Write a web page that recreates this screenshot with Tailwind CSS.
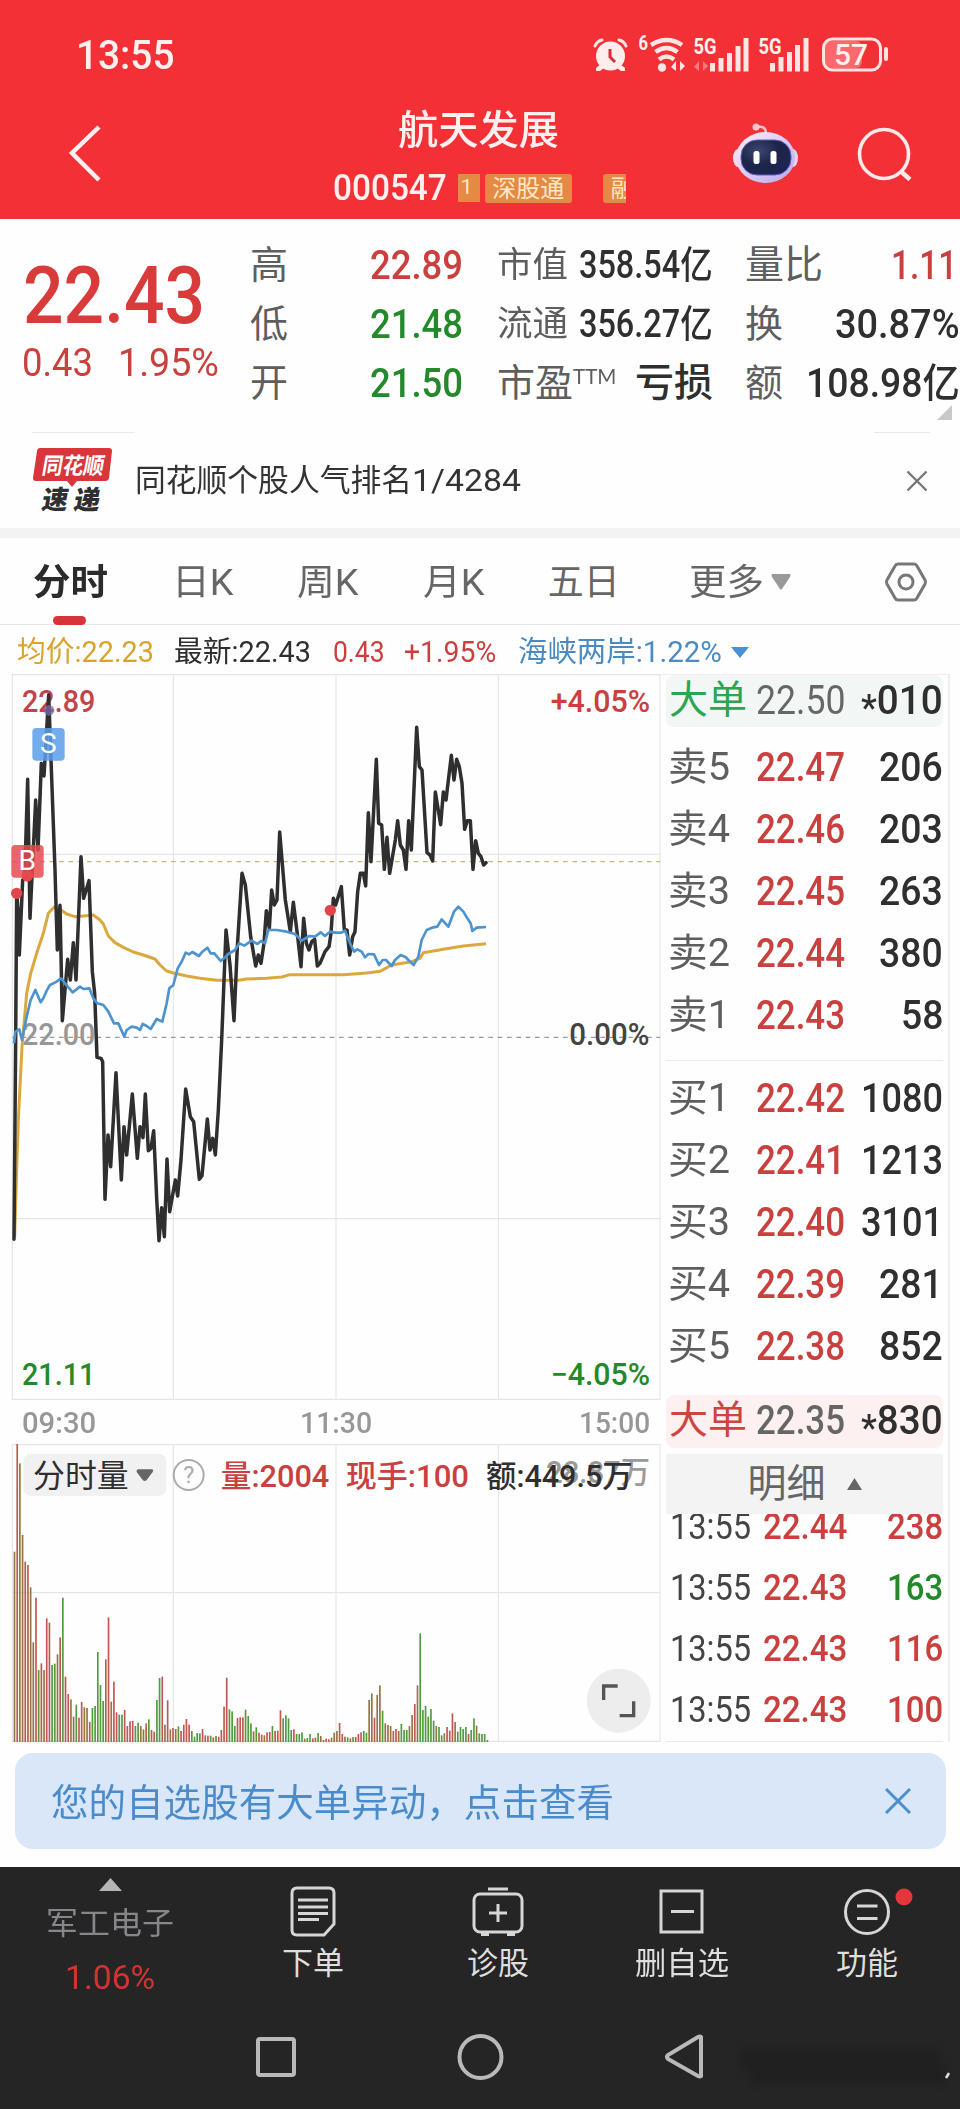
<!DOCTYPE html>
<html lang="zh-CN">
<head>
<meta charset="utf-8">
<title>航天发展 000547</title>
<script src="https://cdn.jsdelivr.net/npm/@tailwindcss/browser@4"></script>
</head>
<body class="bg-white">
<div class="flex h-[2109px] w-[960px] flex-col overflow-hidden bg-[#fefefe] font-[Roboto,'Noto_Sans_CJK_SC',sans-serif] text-[#2f2f2f] [&_[data-w]]:inline-block [&_[data-w]]:shrink-0 [&_[data-w]]:origin-left [&_[data-w]]:whitespace-nowrap">

  <!-- Header -->
  <header class="h-[219px] shrink-0 bg-[#f33036] text-[#fff0f0]">
    <div class="flex h-[82px] items-start justify-between">
      <div class="ml-[76px] mt-[36px] text-[40px] font-medium leading-[40px]"><span data-w="98">13:55</span></div>
      <svg class="mt-[30px] h-[50px] w-[372px]" viewBox="588 30 372 50" fill="none" stroke="#ffe4e4">
        <g stroke="none" fill="#ffecec">
          <circle cx="610.500" cy="56" r="14.500"/>
          <path d="M596 68l5-4 3 4-4 3h-4zM625 68l-5-4-3 4 4 3h4z"/>
        </g>
        <path d="M595 46q2-5 7-6M626 46q-2-5-7-6" stroke-width="3" stroke-linecap="round"/>
        <path d="M610 49v8l5 5" stroke="#d8303a" stroke-width="3"/>
        <path d="M651 45q16-10 31 0M655.500 52q11-8 22 0M659 59.500q7.500-6 15 0" stroke-width="4.500"/>
        <circle cx="662" cy="67.500" r="4.200" fill="#ffe4e4" stroke="none"/>
        <path d="M676 61v10l-5-4zM680 71v-10l5 5z" fill="#ffe4e4" stroke="none"/>
        <path d="M699 61v10l-5-4zM703 71v-10l5 5z" fill="#fb7d80" stroke="none"/>
        <g stroke-width="5">
          <path d="M712.500 71.500V63M721 71.500V58M729.500 71.500V53M738 71.500V46M746 71.500V38"/>
          <path d="M772.500 71.500V63M781 71.500V57M789.500 71.500V52M797.500 71.500V45M806 71.500V38"/>
        </g>
        <rect x="825" y="41" width="37" height="27" rx="6" fill="#fb696d" stroke="none"/>
        <rect x="823.500" y="39" width="57" height="31" rx="9" stroke-width="3"/>
        <path d="M886 49v10" stroke-width="4" stroke-linecap="round"/>
        <g fill="#fff0f0" stroke="none" class="font-bold">
          <text x="638.500" y="49.500" font-size="20" textLength="9.500" lengthAdjust="spacingAndGlyphs">6</text>
          <text x="693.500" y="54" font-size="22" textLength="23" lengthAdjust="spacingAndGlyphs">5G</text>
          <text x="758.500" y="54" font-size="22" textLength="23" lengthAdjust="spacingAndGlyphs">5G</text>
          <text x="834" y="65" font-size="29" class="font-medium" textLength="34" lengthAdjust="spacingAndGlyphs">57</text>
        </g>
      </svg>
    </div>
    <div class="flex h-[137px]">
      <svg class="ml-[60px] mt-[38px] h-[66px] w-[50px] shrink-0" viewBox="60 120 50 66" fill="none"><path d="M99 127L72 153L99 180" stroke="#fff0f0" stroke-width="4.500"/></svg>
      <div class="ml-[223px] w-[295px] shrink-0 overflow-hidden">
        <div class="ml-[65px] mt-[28px] h-[42px] text-[40px] font-medium leading-[42px]"><span data-w="161">航天发展</span></div>
        <div class="mt-[21px] flex h-[30px] items-center">
          <div class="text-[36px] font-medium leading-[32px]"><span data-w="114">000547</span></div>
          <div class="ml-[11px] h-[28px] w-[22px] bg-[#e58a45] pl-[3px] text-[21px] leading-[27px] text-[#ffe9c4]">1</div>
          <div class="ml-[5px] flex h-[29px] w-[87px] justify-center rounded-[3px] bg-[#e58a45] text-[24px] leading-[30px] text-[#ffe9c4]"><span data-w="72">深股通</span></div>
          <div class="ml-[31px] h-[29px] w-[23px] overflow-hidden rounded-l-[3px] bg-[#e58a45] pl-[8px] text-[24px] leading-[30px] text-[#ffe9c4]">融</div>
        </div>
      </div>
      <svg class="ml-[100px] mt-[38px] h-[68px] w-[190px] shrink-0" viewBox="728 120 190 68" fill="none">
        <defs>
          <linearGradient id="shell" x1="0" y1="0" x2="1" y2="1"><stop offset="0" stop-color="#ffeef4"/><stop offset=".5" stop-color="#d9cdf6"/><stop offset="1" stop-color="#b9a5ee"/></linearGradient>
          <radialGradient id="visor" cx=".35" cy=".3" r=".8"><stop offset="0" stop-color="#3b4774"/><stop offset=".5" stop-color="#1d2549"/><stop offset="1" stop-color="#1c2456"/></radialGradient>
        </defs>
        <circle cx="756" cy="127" r="3.500" fill="#ffc4cc"/><path d="M757 127q9-2 9 7" stroke="#ffc4cc" stroke-width="2.500"/>
        <ellipse cx="738" cy="158" rx="5" ry="9" fill="#f3ddf0"/><ellipse cx="793" cy="158" rx="5" ry="9" fill="#e5d5f5"/>
        <ellipse cx="765.500" cy="157.500" rx="29.500" ry="25.500" fill="url(#shell)"/>
        <rect x="741" y="140" width="50" height="35" rx="16" fill="url(#visor)" stroke="#6b5fc0"/>
        <rect x="753.500" y="151" width="6" height="13" rx="2.500" fill="#fff"/><rect x="770.500" y="151" width="6" height="13" rx="2.500" fill="#fff"/>
        <circle cx="884" cy="154" r="24.500" stroke="#ffe9e9" stroke-width="3.600"/><path d="M900.500 171l9.500 8.500" stroke="#ffe9e9" stroke-width="4.500"/>
      </svg>
    </div>
  </header>

  <!-- Quote -->
  <section class="flex h-[213px] shrink-0 pt-[17px]">
    <div class="w-[250px] shrink-0 text-[#d93a3a]">
      <div class="ml-[23px] mt-[20px] h-[80px] text-[80px] font-medium leading-[80px]"><span data-w="182">22.43</span></div>
      <div class="ml-[22px] mt-[7px] flex h-[40px] gap-[25px] text-[38px] leading-[40px] text-[#c9403e]"><span data-w="71">0.43</span><span data-w="101">1.95%</span></div>
    </div>
    <div class="w-[213px] shrink-0 text-[40px] leading-[59px]">
      <div class="flex justify-between"><span class="text-[38px] text-[#5e5e5e]">高</span><span data-w="93" class="font-medium text-[#c9403e]">22.89</span></div>
      <div class="flex justify-between"><span class="text-[38px] text-[#5e5e5e]">低</span><span data-w="93" class="font-medium text-[#23892a]">21.48</span></div>
      <div class="flex justify-between"><span class="text-[38px] text-[#5e5e5e]">开</span><span data-w="93" class="font-medium text-[#23892a]">21.50</span></div>
    </div>
    <div class="ml-[34px] w-[216px] shrink-0 text-[38px] leading-[59px]">
      <div class="flex justify-between"><span data-w="71" class="text-[35px] text-[#5e5e5e]">市值</span><span data-w="134" class="font-medium">358.54亿</span></div>
      <div class="flex justify-between"><span data-w="71" class="text-[35px] text-[#5e5e5e]">流通</span><span data-w="134" class="font-medium">356.27亿</span></div>
      <div class="flex"><span class="text-[38px] text-[#5e5e5e]">市盈</span><span data-w="43" class="-mt-[8px] font-[Lato] text-[22px] text-[#5e5e5e]">TTM</span><span class="ml-auto text-[39px] font-medium">亏损</span></div>
    </div>
    <div class="ml-[32px] w-[215px] shrink-0 text-[40px] leading-[59px]">
      <div class="flex justify-between pr-[3px]"><span class="text-[39px] text-[#5e5e5e]">量比</span><span data-w="66" class="font-medium text-[#c9403e]">1.11</span></div>
      <div class="flex justify-between"><span class="text-[38px] text-[#5e5e5e]">换</span><span data-w="125" class="font-medium">30.87%</span></div>
      <div class="flex justify-between"><span class="text-[38px] text-[#5e5e5e]">额</span><span data-w="154" class="font-medium">108.98亿</span></div>
      <svg class="-mt-[8px] ml-[192px] h-[15px] w-[16px]" viewBox="0 0 16 15"><path d="M0 15L15 0V15Z" fill="#c9c9c9"/></svg>
    </div>
  </section>

  <!-- News strip -->
  <section class="flex h-[96px] shrink-0 flex-col">
    <div class="flex justify-between pl-8 pr-[30px]"><div class="h-px w-[103px] bg-[#e9e9e9]"></div><div class="h-px w-[56px] bg-[#e9e9e9]"></div></div>
    <div class="flex h-[95px] items-start">
      <svg class="ml-[30px] mt-[11px] h-[72px] w-[86px]" viewBox="30 444 86 72">
        <path d="M40 448H109Q112 448 112 451L109 478Q108.500 481 105 481H77L72 487L67 481H36Q33 481 33 478L37 451Q37.500 448 40 448Z" fill="#d8363a"/>
        <g class="font-bold" transform="translate(0 474) skewX(-10)">
          <text x="41" y="0" font-size="23" fill="#fff" textLength="62" lengthAdjust="spacingAndGlyphs">同花顺</text>
          <text x="47" y="35" font-size="26" fill="#2f2f2f" class="font-black" textLength="58">速递</text>
        </g>
      </svg>
      <div class="ml-[19px] flex h-[95px] text-[31px] leading-[96px] text-[#333]"><span data-w="277">同花顺个股人气排名</span><span data-w="109">1/4284</span></div>
      <svg class="ml-auto mr-[31px] mt-[36px] size-6" viewBox="0 0 24 24" stroke="#777" stroke-width="2.400"><path d="M2.500 2.500L21.500 21.500M21.500 2.500L2.500 21.500"/></svg>
    </div>
  </section>
  <div class="h-[10px] shrink-0 bg-[#f3f3f3]"></div>

  <!-- Period tabs -->
  <nav class="flex h-[87px] shrink-0 items-start border-b border-[#e6e6e6] text-[36px] leading-[91px] text-[#666]">
    <div class="ml-[33px] flex w-[75px] flex-col items-center font-bold text-[#2b2b2b]"><span data-w="75">分时</span><div class="-mt-[13px] -ml-[2px] h-[9px] w-[33px] rounded-full bg-[#d63438]"></div></div>
    <div class="ml-[64px]"><span data-w="62">日K</span></div>
    <div class="ml-[63px]"><span data-w="62">周K</span></div>
    <div class="ml-[65px]"><span data-w="62">月K</span></div>
    <div class="ml-[63px]"><span data-w="72">五日</span></div>
    <div class="ml-[69px]"><span data-w="75">更多</span></div>
    <svg class="ml-[7px] mt-[36px] h-[16px] w-[20px]" viewBox="0 0 20 16"><path d="M1 0H19Q20 1 19 3L11 15Q10 16 9 15L1 3Q0 1 1 0Z" fill="#999"/></svg>
    <svg class="ml-[92px] mt-[21px] h-[46px] w-[46px]" viewBox="0 0 46 46" fill="none" stroke="#777" stroke-width="3"><path d="M15 5H31Q33 5 34 7L42 21Q43 23 42 25L34 39Q33 41 31 41H15Q13 41 12 39L4 25Q3 23 4 21L12 7Q13 5 15 5Z"/><circle cx="23" cy="23" r="7"/></svg>
  </nav>

  <!-- Price summary -->
  <div class="flex h-[49px] shrink-0 items-start text-[29px] leading-[54px]">
    <span data-w="137" class="ml-[17px] text-[#dba32c]">均价:22.23</span>
    <span data-w="137" class="ml-[20px]">最新:22.43</span>
    <span data-w="52" class="ml-[22px] text-[#c9403e]">0.43</span>
    <span data-w="92" class="ml-[20px] text-[#c9403e]">+1.95%</span>
    <span data-w="204" class="ml-[21px] text-[#4a8cc2]">海峡两岸:1.22%</span>
    <svg class="ml-[10px] mt-[22px] h-[11px] w-[18px]" viewBox="0 0 18 11"><path d="M0 0H18L9 11Z" fill="#4a90d4"/></svg>
  </div>

  <!-- Charts and order book -->
  <main class="flex h-[1068px] shrink-0">
    <div class="w-[661px] shrink-0">
      <svg class="block h-[726px] w-[661px]" viewBox="0 12 1983 2178" fill="none">
        <g stroke="#e4e6e6" stroke-width="3.500">
          <path d="M37 14H1980V2188H37Z"/>
          <path d="M520 14V2188M1008 14V2188M1495 14V2188M37 553H1980M37 1646H1980"/>
        </g>
        <path d="M37 575H1980" stroke="#cbb27c" stroke-width="4" stroke-dasharray="14 14"/>
        <path d="M37 1102H1980" stroke="#999" stroke-width="3.500" stroke-dasharray="14 14"/>
        <g font-size="92" class="font-medium">
          <text x="66" y="126" fill="#c0444c" textLength="220" lengthAdjust="spacingAndGlyphs">22.89</text>
          <text x="66" y="1125" fill="#979797" textLength="220" lengthAdjust="spacingAndGlyphs">22.00</text>
          <text x="66" y="2145" fill="#23892a" textLength="220" lengthAdjust="spacingAndGlyphs">21.11</text>
          <text x="1652" y="126" fill="#c9403e" textLength="298" lengthAdjust="spacingAndGlyphs">+4.05%</text>
          <text x="1708" y="1125" fill="#444" textLength="240" lengthAdjust="spacingAndGlyphs">0.00%</text>
          <text x="1652" y="2145" fill="#23892a" textLength="298" lengthAdjust="spacingAndGlyphs">−4.05%</text>
        </g>
        <polyline stroke="#dba83f" stroke-width="9" stroke-linejoin="round" points="44,1700 50,1500 55,1350 66,1130 80,970 92,910 110,850 130,790 145,730 162,712 180,718 200,732 225,740 250,738 280,735 300,750 310,762 325,798 345,818 370,832 400,846 430,855 465,867 480,885 500,903 520,909 560,918 600,925 650,931 715,931 740,927 800,925 845,921 870,914 1030,914 1100,909 1140,904 1175,885 1235,875 1260,865 1270,848 1330,838 1390,828 1458,821"/>
        <polyline stroke="#2f2f2f" stroke-width="10.500" stroke-linejoin="round" stroke-linecap="round" points="42,1708 47,1110 50,665 55,735 58,855 68,630 74,625 83,328 90,745 107,390 114,540 124,280 132,318 146,75 165,600 172,840 180,706 187,1052 203,868 211,930 220,818 228,930 243,560 251,685 267,632 277,905 284,970 291,1162 303,1165 308,1175 315,1588 324,1395 332,1490 348,1208 364,1530 372,1370 380,1455 397,1272 412,1465 420,1370 429,1403 436,1272 445,1442 453,1435 461,1382 470,1585 477,1712 485,1613 493,1700 501,1467 509,1625 526,1530 533,1578 543,1470 557,1257 571,1340 581,1355 598,1528 606,1517 622,1347 630,1440 638,1405 646,1455 655,1320 665,1110 678,780 690,885 702,1052 712,830 726,610 736,645 752,800 767,888 775,855 783,880 792,820 799,722 808,775 815,660 823,705 831,690 839,486 856,690 871,785 880,697 893,800 903,890 911,745 919,820 927,840 935,815 944,808 952,888 960,880 975,845 987,830 993,790 1000,685 1007,705 1024,650 1033,780 1041,780 1049,855 1058,800 1065,785 1073,665 1081,610 1090,610 1097,648 1105,428 1113,575 1129,268 1136,460 1145,465 1153,598 1161,502 1169,610 1186,510 1193,452 1201,525 1210,540 1218,598 1226,452 1234,540 1250,172 1258,290 1266,300 1281,548 1290,555 1298,573 1306,366 1322,464 1330,366 1338,390 1354,256 1362,330 1370,268 1378,290 1386,340 1394,478 1402,452 1411,452 1419,598 1427,512 1435,550 1443,560 1451,585 1458,578"/>
        <polyline stroke="#4d93cf" stroke-width="8" stroke-linejoin="round" points="42,1120 46,1085 58,1078 66,1110 80,1040 92,990 106,960 122,997 130,985 140,962 150,945 170,935 183,925 195,940 218,967 240,950 250,957 268,955 280,985 292,1000 310,1005 325,1025 342,1060 355,1060 373,1100 380,1080 395,1070 410,1073 420,1080 428,1062 440,1068 452,1077 470,1047 487,1055 500,1000 508,955 520,945 533,895 545,875 557,848 567,853 577,846 587,852 597,858 607,845 622,833 632,850 643,850 662,873 672,865 685,852 705,840 718,820 733,827 755,812 772,822 783,813 795,820 805,780 830,780 860,785 885,792 905,812 928,798 945,800 962,787 975,798 990,785 1005,788 1025,788 1035,782 1048,815 1062,845 1072,838 1085,845 1095,862 1105,852 1122,853 1137,885 1148,870 1158,870 1175,888 1185,870 1202,855 1218,862 1225,870 1241,885 1255,860 1265,810 1280,780 1300,772 1312,770 1325,748 1345,770 1362,725 1375,710 1390,725 1402,745 1412,760 1417,783 1430,773 1458,771"/>
        <circle cx="147" cy="121" r="16" fill="#7d6aa8" opacity=".75"/>
        <circle cx="82" cy="618" r="17" fill="#e2464b"/>
        <circle cx="50" cy="670" r="17" fill="#e2464b"/>
        <circle cx="991" cy="721" r="17" fill="#e2464b"/>
        <rect x="97" y="174" width="97" height="98" rx="12" fill="#5c9eea" opacity=".86"/>
        <rect x="34" y="525" width="97" height="98" rx="12" fill="#e5494d" opacity=".84"/>
        <text x="145" y="250" font-size="84" fill="#fff" text-anchor="middle">S</text>
        <text x="82" y="601" font-size="84" fill="#fff" text-anchor="middle">B</text>
      </svg>
      <div class="flex h-[44px] justify-between pl-[22px] pr-[11px] text-[30px] font-medium leading-[46px] text-[#979797]"><span data-w="74">09:30</span><span data-w="72" class="-ml-[2px]">11:30</span><span data-w="71">15:00</span></div>
      <svg class="block h-[298px] w-[661px]" viewBox="0 72 1983 894" fill="none">
        <g stroke="#e4e6e6" stroke-width="3.500"><path d="M37 74H1980V964H37ZM520 74V964M1008 74V964M1495 74V964M37 518H1980"/></g>
        <g id="bars"></g>
        <rect x="70" y="101" width="429" height="127" rx="22" fill="#f0f0f0" opacity=".94"/>
        <path d="M414 148H456Q462 150 458 156L440 180Q434 186 428 180L410 156Q408 150 414 148Z" fill="#666"/>
        <circle cx="566" cy="165" r="45" stroke="#ababab" stroke-width="6"/>
        <g font-size="92">
          <text x="1638" y="188" fill="#9a9a9a" class="font-medium" textLength="312" lengthAdjust="spacingAndGlyphs">28.87万</text>
          <text x="99" y="202" fill="#2f2f2f" font-size="94" textLength="287" lengthAdjust="spacingAndGlyphs">分时量</text>
          <text x="566" y="190" font-size="70" fill="#ababab" text-anchor="middle">?</text>
          <g class="font-medium">
            <text x="662" y="200" fill="#c9403e" textLength="326" lengthAdjust="spacingAndGlyphs">量:2004</text>
            <text x="1037" y="200" fill="#c9403e" textLength="370" lengthAdjust="spacingAndGlyphs">现手:100</text>
            <text x="1458" y="200" fill="#2f2f2f" textLength="440" lengthAdjust="spacingAndGlyphs">额:449.5万</text>
          </g>
        </g>
        <circle cx="1856" cy="842" r="96" fill="#ededed"/>
        <path d="M1811 840V798H1853M1901 844V887H1859" stroke="#555" stroke-width="10"/>
      </svg>
    </div>

    <div class="ml-[1px] w-[288px] shrink-0 border-r-2 border-t border-[#efefef] pl-[4px] pr-[5px] text-[40px]">
      <div class="flex h-[52px] items-center rounded-lg bg-[#f2f7f5] leading-[50px] text-[#666]"><span data-w="78" class="ml-[3px] pb-[2px] text-[39px] text-[#2ba650]">大单</span><span data-w="89" class="ml-[9px]">22.50</span><span data-w="82" class="ml-auto font-medium text-[#2f2f2f]"><span class="relative top-[6px] text-[37px]">*</span>010</span></div>
      <div id="asks" class="mt-[10px]"></div>
      <div class="mt-[14px] h-px bg-[#ececec]"></div>
      <div id="bids" class="mt-[7px]"></div>
      <div class="mt-[18px] flex h-[53px] items-center rounded-lg bg-[#fdf0f1] leading-[50px] text-[#666]"><span data-w="78" class="ml-[3px] pb-[2px] text-[39px] text-[#cf443e]">大单</span><span data-w="89" class="ml-[9px] font-medium">22.35</span><span data-w="82" class="ml-auto font-medium text-[#2f2f2f]"><span class="relative top-[6px] text-[37px]">*</span>830</span></div>
      <div class="mt-[6px] flex h-[60px] items-center justify-center bg-[#f3f3f3] leading-[62px] text-[#666]"><span data-w="78" class="text-[39px]">明细</span><svg class="ml-[21px] h-[12px] w-[15px]" viewBox="0 0 15 12"><path d="M7.500 0L15 12H0Z" fill="#666"/></svg></div>
      <div class="h-[228px] overflow-hidden border-b border-[#e9e9e9]"><div id="trades" class="-mt-[18px]"></div></div>
    </div>
  </main>

  <!-- Alert banner -->
  <div class="h-[125px] shrink-0 pl-[15px] pr-[14px] pt-[11px]">
    <div class="flex h-[96px] items-center justify-between rounded-[18px] bg-[#d9e7f9] pl-[36px] pr-[35px] text-[38px] leading-[96px] text-[#4a8ccb]">
      <span data-w="563" class="pt-[3px]">您的自选股有大单异动，点击查看</span>
      <svg class="size-[26px]" viewBox="0 0 26 26" stroke="#4a8fd0" stroke-width="3"><path d="M1 1L25 25M25 1L1 25"/></svg>
    </div>
  </div>

  <!-- Toolbar -->
  <footer class="flex h-[242px] shrink-0 flex-col bg-[#252525] text-[#dedede]">
    <div class="flex h-[142px] text-[31px] leading-[40px]">
      <div class="flex w-[220px] flex-col items-center">
        <svg class="mt-[11px] h-[13px] w-[23px]" viewBox="0 0 23 13"><path d="M11.500 0L23 13H0Z" fill="#b5b5b5"/></svg>
        <span class="mt-[13px] text-[#86868b]" data-w="128">军工电子</span>
        <span class="mt-[13px] text-[34px] text-[#cf3530]" data-w="90">1.06%</span>
      </div>
      <div class="flex w-[186px] flex-col items-center">
        <svg class="mt-[18px] h-[52px] w-[46px]" viewBox="0 0 46 52" fill="none" stroke="#d6d6d6" stroke-width="3"><path d="M7 3H39Q44 3 44 8V39L34 50H7Q2 50 2 45V8Q2 3 7 3Z"/><path d="M8 15H38M8 22H38M8 28.500H38M8 34.500H29"/></svg>
        <span class="mt-[7px]" data-w="62">下单</span>
      </div>
      <div class="flex w-[184px] flex-col items-center">
        <svg class="mt-[18px] h-[52px] w-[52px]" viewBox="0 0 52 52" fill="none" stroke="#d6d6d6" stroke-width="3"><path d="M16 4H36"/><rect x="2" y="9" width="48" height="38" rx="6"/><path d="M26 19V37M17 28H35"/><path d="M9 49H17M35 49H43" stroke-width="4"/></svg>
        <span class="mt-[7px]" data-w="62">诊股</span>
      </div>
      <div class="flex w-[184px] flex-col items-center">
        <svg class="mt-[20px] h-[50px] w-[46px]" viewBox="0 0 46 50" fill="none" stroke="#d6d6d6" stroke-width="3"><rect x="2" y="4" width="41" height="41"/><path d="M12 24.500H35"/></svg>
        <span class="mt-[7px]" data-w="94">删自选</span>
      </div>
      <div class="flex w-[186px] flex-col items-center">
        <svg class="ml-[40px] mt-[18px] h-[52px] w-[86px]" viewBox="0 0 86 52" fill="none" stroke="#d6d6d6" stroke-width="3"><circle cx="23" cy="27" r="21.500"/><path d="M13 21H33.500M13 33.500H33.500"/><circle cx="60" cy="12" r="8.500" fill="#e2383c" stroke="none"/></svg>
        <span class="mt-[7px]" data-w="62">功能</span>
      </div>
    </div>
    <div class="flex h-[100px] items-start">
      <svg class="ml-[250px] mt-[22px] h-[52px] w-[460px]" viewBox="250 2031 460 52" fill="none" stroke="#b9b9b9" stroke-width="4"><rect x="258" y="2039" width="36" height="36" rx="2"/><circle cx="480.500" cy="2057" r="21"/><path d="M701 2037V2076Q700 2077 698 2076L668 2059Q666 2057 668 2055L698 2037Q700 2036 701 2037Z"/></svg>
      <svg class="ml-[20px] mt-[22px] h-[60px] w-[226px]" viewBox="0 0 226 60" fill="none"><g opacity=".45" stroke="#1a1a1a" stroke-width="18" class="blur-[4px]"><path d="M10 28H210M20 44H216"/></g><path d="M219 42L216 47" stroke="#ddd" stroke-width="2.500"/></svg>
    </div>
  </footer>
</div>

<script>
  const book = (id, rows) => document.getElementById(id).innerHTML = rows.map(([n, p, v]) =>
    `<div class="flex h-[61.800px] items-center leading-[61px]"><span data-w="62" class="ml-[2px] text-[39px] text-[#5e5e5e]">${n}</span><span data-w="89" class="ml-[26px] font-medium text-[#c9403e]">${p}</span><span data-w="${v.length === 4 ? 82 : v.length * 21.5 - 1}" class="ml-auto font-medium">${v}</span></div>`).join('');
  book('asks', [['卖5','22.47','206'],['卖4','22.46','203'],['卖3','22.45','263'],['卖2','22.44','380'],['卖1','22.43','58']]);
  book('bids', [['买1','22.42','1080'],['买2','22.41','1213'],['买3','22.40','3101'],['买4','22.39','281'],['买5','22.38','852']]);
  document.getElementById('trades').innerHTML = [['22.44','238',1],['22.43','163',0],['22.43','116',1],['22.43','100',1]].map(([p, v, up]) =>
    `<div class="flex h-[61px] items-center text-[37px] leading-[61px]"><span data-w="81" class="ml-[4px] text-[#444]">13:55</span><span data-w="84" class="ml-[12px] font-medium text-[#c9403e]">${p}</span><span data-w="56" class="ml-auto font-medium ${up ? 'text-[#c9403e]' : 'text-[#23892a]'}">${v}</span></div>`).join('');

  // Volume per minute: height followed by r (up), g (down) or m (flat)
  const volume = '571m 896r 836m 621m 541r 531r 464m 299m 433r 216g 236r 216m 371r 358r 231g 235g 263m 314r 433g 196r 144r 128m 76m 112g 73r 120r 104m 102m 60r 102g 108g 270g 171g 123g 248m 374r 121m 181r 89r 82g 82g 96r 48r 62r 63r 48g 58g 48m 38m 56r 68g 36r 31r 126g 192g 196r 52m 125r 38m 42r 39m 47g 33r 52r 69r 52r 33g 16g 27g 26g 39r 20r 19r 19g 14r 18g 16r 36r 106r 193r 98g 92g 48g 72r 74r 74r 97g 78g 56g 32m 44g 28r 22r 20m 29r 30r 48g 33r 34r 95r 71g 80g 71g 36g 38r 24g 24g 29g 10m 12g 24g 11r 13r 27g 18m 6r 10r 8r 13m 28m 33m 57r 24r 16m 14g 11r 15g 15r 24r 29r 33g 28g 126m 146m 73r 141m 170m 94g 56m 51m 48m 33r 39r 33m 54g 36g 36g 48m 81m 114r 170m 326g 96g 108g 76g 99g 64g 48m 45g 20g 26m 45r 34r 86r 60m 31g 45g 39g 45g 24r 36g 71g 49m 26g 24g 24g 6m'.split(' ');
  const tint = { r: '#bf5850', g: '#4f9b3e', m: '#94753f' };
  document.getElementById('bars').innerHTML = volume.map((s, i) => {
    const h = parseInt(s);
    return `<rect x="${(41 + i * 8.06).toFixed(1)}" y="${966 - h}" width="5" height="${h}" fill="${tint[s.at(-1)]}"/>`;
  }).join('');

  // Condense each label to its column width, again whenever its natural width changes
  const fit = el => {
    const w = +el.dataset.w, natural = el.offsetWidth;
    if (!natural) return;
    el.style.transform = `scaleX(${w / natural})`;
    el.style.marginRight = `${w - natural}px`;
  };
  const labels = document.querySelectorAll('[data-w]');
  const observer = new ResizeObserver(entries => entries.forEach(e => fit(e.target)));
  labels.forEach(el => observer.observe(el));
  addEventListener('load', () => labels.forEach(fit));
</script>
</body>
</html>
